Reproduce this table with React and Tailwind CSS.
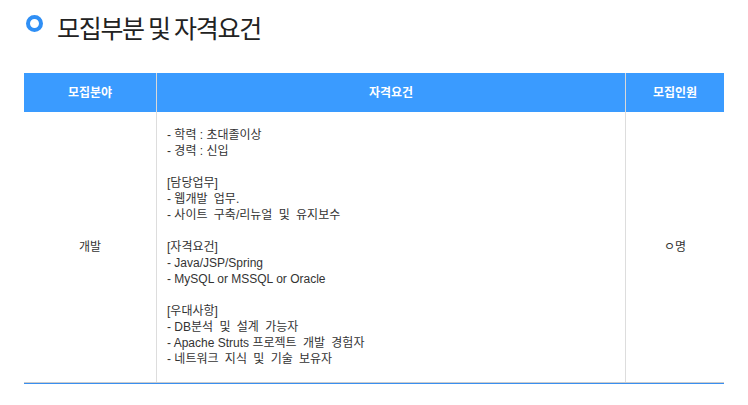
const HANGUL = /([\uAC00-\uD7A3](?:[\uAC00-\uD7A3 ]*[\uAC00-\uD7A3])?)/;

function Line({ text }) {
  if (!text) return <div className="h-[16px] leading-[16px]">{"\u00a0"}</div>;
  const parts = text.split(HANGUL);
  return (
    <div className="h-[16px] leading-[16px] whitespace-pre">
      {parts.map((p, i) =>
        i % 2 === 1 ? (
          <span key={i} className="[word-spacing:3px]">{p}</span>
        ) : (
          <span key={i}>{p}</span>
        )
      )}
    </div>
  );
}

export default function App() {
  const lines = [
    "- 학력 : 초대졸이상",
    "- 경력 : 신입",
    "",
    "[담당업무]",
    "- 웹개발 업무.",
    "- 사이트 구축/리뉴얼 및 유지보수",
    "",
    "[자격요건]",
    "- Java/JSP/Spring",
    "- MySQL or MSSQL or Oracle",
    "",
    "[우대사항]",
    "- DB분석 및 설계 가능자",
    "- Apache Struts 프로젝트 개발 경험자",
    "- 네트워크 지식 및 기술 보유자",
  ];
  const font = { fontFamily: '"Liberation Sans", "Noto Sans CJK KR", sans-serif' };
  return (
    <div className="w-[748px] h-[405px] bg-white" style={font}>
      <div className="flex items-start pt-[12px] pl-[26px] h-[46px]">
        <div className="mt-[3px] w-[17px] h-[17px] rounded-full border-[4px] border-[#2f8ff5] shrink-0" />
        <h2 className="ml-[14px] text-[25px] leading-[30px] text-[#222] tracking-[-1.3px]" style={{ fontFamily: '"Noto Sans CJK KR", sans-serif' }}>
          모집부분 및 자격요건
        </h2>
      </div>
      <div className="mt-[27px] ml-[24px] w-[700px] border-b border-b-[#3a8ff0]">
        <div className="grid grid-cols-[133px_469px_98px] h-[39px] bg-[#3a9bff] text-white text-[12px] font-bold">
          <div className="flex items-center justify-center border-r border-[#d9d9d9]">모집분야</div>
          <div className="flex items-center justify-center border-r border-[#d9d9d9]">자격요건</div>
          <div className="flex items-center justify-center">모집인원</div>
        </div>
        <div className="grid grid-cols-[133px_469px_98px] border-b border-[#cccccc] text-[12px] text-[#333]">
          <div className="flex items-center justify-center border-r border-[#dddddd]">개발</div>
          <div className="border-r border-[#dddddd] pl-[10px] pt-[15px] pb-[15px]">
            {lines.map((l, i) => (
              <Line key={i} text={l} />
            ))}
          </div>
          <div className="flex items-center justify-center">ㅇ명</div>
        </div>
      </div>
    </div>
  );
}
